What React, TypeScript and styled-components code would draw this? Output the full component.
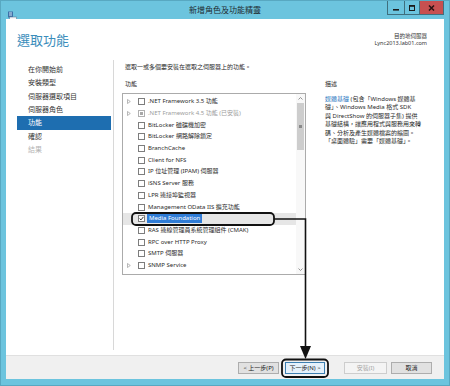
import styled, { createGlobalStyle } from 'styled-components'

const GlobalStyle = createGlobalStyle`
  html, body {
    margin: 0;
    padding: 0;
    background: #ffffff;
  }
  body {
    font-family: "Noto Sans", "Noto Sans CJK TC", sans-serif;
    color: #2b2b2b;
  }
  * {
    box-sizing: border-box;
  }
`

const Window = styled.div`
  position: relative;
  width: 450px;
  height: 386px;
  background: #6cc4de;
  border: 1px solid #58a8c1;
  display: flex;
  flex-direction: column;
  overflow: hidden;
`

const TitleBar = styled.div`
  height: 18px;
  flex: 0 0 18px;
  display: grid;
  grid-template-columns: 1fr auto 1fr;
  align-items: start;
`

const AppIcon = styled.div`
  justify-self: start;
  margin: 3px 0 0 6px;
  width: 10px;
  height: 10px;
`

const Caption = styled.div`
  font-size: 8px;
  line-height: 18px;
  color: #1e2a30;
  font-family: "Noto Sans CJK TC", sans-serif;
`

const Controls = styled.div`
  justify-self: end;
  margin-right: 5px;
  display: flex;
  height: 14px;
  border: 1px solid #3f6f7e;
  border-top: none;
`

const CtrlButton = styled.div<{ $w: number; $close?: boolean }>`
  width: ${(p) => p.$w}px;
  height: 13px;
  display: flex;
  align-items: center;
  justify-content: center;
  background: ${(p) => (p.$close ? '#c75050' : 'transparent')};
  & + & {
    border-left: 1px solid #3f6f7e;
  }
`

const Client = styled.div`
  flex: 1;
  margin: 0 5px 6px 5px;
  background: #ffffff;
  display: flex;
  flex-direction: column;
`

const Main = styled.div`
  flex: 1;
  display: flex;
  flex-direction: column;
`

const Header = styled.div`
  height: 41px;
  flex: 0 0 41px;
  display: flex;
  justify-content: space-between;
  align-items: flex-start;
  padding: 13px 17px 0 11px;
`

const Heading = styled.h1`
  margin: 0;
  font-size: 13px;
  line-height: 16px;
  font-weight: 400;
  color: #3a8dbb;
  font-family: "Noto Sans CJK TC", sans-serif;
`

const Target = styled.div`
  text-align: right;
  font-size: 5.5px;
  line-height: 7px;
  color: #333;
  margin-top: 1px;
`

const Body = styled.div`
  flex: 1;
  display: flex;
  padding-bottom: 5px;
`

const Nav = styled.ul`
  list-style: none;
  margin: 0;
  width: 108px;
  flex: 0 0 108px;
  padding: 3px 2px 0 11px;
  border-right: 1px solid #d8d8d8;
`

const NavItem = styled.li<{ $active?: boolean; $disabled?: boolean }>`
  height: 13.33px;
  line-height: 13.33px;
  font-size: 7px;
  padding-left: 11px;
  background: ${(p) => (p.$active ? '#1e6eb0' : 'transparent')};
  color: ${(p) => (p.$active ? '#ffffff' : p.$disabled ? '#b4b4b4' : '#333333')};
`

const Content = styled.div`
  flex: 1;
  padding-top: 3px;
  display: flex;
  flex-direction: column;
`

const Intro = styled.div`
  font-size: 6px;
  line-height: 9px;
  padding-left: 11px;
`

const Columns = styled.div`
  display: flex;
  gap: 19px;
  padding-left: 8px;
  margin-top: 7.5px;
`

const Column = styled.div<{ $w?: number }>`
  display: flex;
  flex-direction: column;
  width: ${(p) => (p.$w ? `${p.$w}px` : 'auto')};
`

const Label = styled.div<{ $indent?: number }>`
  font-size: 6px;
  line-height: 9px;
  padding-left: ${(p) => p.$indent ?? 0}px;
`

const ListBox = styled.div`
  margin-top: 4.5px;
  width: 184px;
  height: 182px;
  border: 1px solid #ababab;
  display: flex;
  overflow: hidden;
`

const Rows = styled.div`
  flex: 1;
  padding-top: 2px;
  overflow: hidden;
`

const Row = styled.div<{ $selected?: boolean; $disabled?: boolean }>`
  height: 11.7px;
  display: flex;
  align-items: center;
  padding-left: 4px;
  font-size: 6px;
  white-space: nowrap;
  background: ${(p) => (p.$selected ? '#e6e6e6' : 'transparent')};
  color: ${(p) => (p.$disabled ? '#9d9d9d' : '#2b2b2b')};
`

const Expander = styled.div<{ $show?: boolean }>`
  width: 11px;
  flex: 0 0 11px;
  display: flex;
  align-items: center;
  visibility: ${(p) => (p.$show ? 'visible' : 'hidden')};
`

const Box = styled.div<{ $state: 'off' | 'on' | 'part' }>`
  width: 7px;
  height: 7px;
  flex: 0 0 7px;
  border: 1px solid ${(p) => (p.$state === 'part' ? '#b0b0b0' : '#7d7d7d')};
  background: #fff;
  display: flex;
  align-items: center;
  justify-content: center;
  &::after {
    content: '';
    display: ${(p) => (p.$state === 'part' ? 'block' : 'none')};
    width: 3px;
    height: 3px;
    background: #a8a8a8;
  }
`

const RowText = styled.span<{ $selected?: boolean }>`
  margin-left: ${(p) => (p.$selected ? '2px' : '3px')};
  padding: ${(p) => (p.$selected ? '0 2px' : '0')};
  line-height: 9px;
  background: ${(p) => (p.$selected ? '#2f7cd6' : 'transparent')};
  color: ${(p) => (p.$selected ? '#ffffff' : 'inherit')};
`

const ScrollBar = styled.div`
  width: 9px;
  flex: 0 0 9px;
  background: #f8f8f8;
  display: flex;
  flex-direction: column;
`

const ScrollArrow = styled.div`
  height: 9px;
  flex: 0 0 9px;
  display: flex;
  align-items: center;
  justify-content: center;
`

const Track = styled.div`
  flex: 1;
`

const Thumb = styled.div`
  height: 47px;
  margin: 0 1px;
  background: #cdcdcd;
  display: flex;
  align-items: center;
  justify-content: center;
`

const Grip = styled.div`
  width: 3px;
  height: 3px;
  border-top: 1px solid #8a8a8a;
  border-bottom: 1px solid #8a8a8a;
  position: relative;
  &::after {
    content: '';
    position: absolute;
    left: 0;
    right: 0;
    top: 0;
    border-top: 1px solid #8a8a8a;
  }
`

const Description = styled.div`
  margin-top: 6px;
  font-size: 6px;
  line-height: 8.6px;
  color: #2b2b2b;
  font-family: "Noto Sans", "Noto Sans CJK TC", sans-serif;
`

const Link = styled.span`
  color: #1e74c0;
`

const Footer = styled.div`
  height: 24px;
  flex: 0 0 24px;
  background: #f0f0f0;
  border-top: 1px solid #e0e0e0;
  display: flex;
  align-items: center;
  justify-content: flex-end;
  padding-right: 12px;
`

const Button = styled.div<{ $w: number; $gap: number; $primary?: boolean; $disabled?: boolean }>`
  width: ${(p) => p.$w}px;
  height: 12px;
  margin-left: ${(p) => p.$gap}px;
  border: 1px solid ${(p) => (p.$primary ? '#3c7fb1' : p.$disabled ? '#cdcdcd' : '#adadad')};
  background: ${(p) => (p.$primary ? '#e5f1fb' : p.$disabled ? '#f4f4f4' : '#e1e1e1')};
  color: ${(p) => (p.$disabled ? '#a6a6a6' : '#222')};
  font-size: 6px;
  line-height: 10px;
  text-align: center;
  white-space: nowrap;
`

const Overlay = styled.svg`
  position: absolute;
  left: -1px;
  top: -1px;
  pointer-events: none;
`

type Feature = { name: string; expand?: boolean; state?: 'off' | 'on' | 'part'; disabled?: boolean; selected?: boolean }

// last row is only partly visible at the bottom of the list, its label is hidden
const features: Feature[] = [
  { name: '.NET Framework 3.5 功能', expand: true },
  { name: '.NET Framework 4.5 功能 (已安裝)', expand: true, state: 'part', disabled: true },
  { name: 'BitLocker 磁碟機加密' },
  { name: 'BitLocker 網路解除鎖定' },
  { name: 'BranchCache' },
  { name: 'Client for NFS' },
  { name: 'IP 位址管理 (IPAM) 伺服器' },
  { name: 'iSNS Server 服務' },
  { name: 'LPR 連接埠監視器' },
  { name: 'Management OData IIS 擴充功能' },
  { name: 'Media Foundation', state: 'on', selected: true },
  { name: 'RAS 連線管理員系統管理組件 (CMAK)' },
  { name: 'RPC over HTTP Proxy' },
  { name: 'SMTP 伺服器' },
  { name: 'SNMP Service', expand: true },
  { name: '' },
]

const steps = ['在你開始前', '安裝類型', '伺服器選取項目', '伺服器角色', '功能', '確認', '結果']

const Chevron = ({ up }: { up?: boolean }) => (
  <svg width="5" height="3" viewBox="0 0 5 3">
    <path d={up ? 'M0.5 2.5 L2.5 0.5 L4.5 2.5' : 'M0.5 0.5 L2.5 2.5 L4.5 0.5'} stroke="#7a7a7a" strokeWidth="0.8" fill="none" />
  </svg>
)

const App = () => {
  return (
    <>
      <GlobalStyle />
      <Window>
        <TitleBar>
          <AppIcon>
            <svg width="10" height="10" viewBox="0 0 10 10">
              <rect x="1" y="0.5" width="5" height="6" fill="#3d6fa8" />
              <rect x="2" y="1.5" width="3" height="1" fill="#cfe3f3" />
              <rect x="2" y="3.5" width="3" height="1" fill="#cfe3f3" />
              <rect x="2.5" y="6" width="7" height="3.5" fill="#f4f6f8" stroke="#5a7b96" strokeWidth="0.6" />
            </svg>
          </AppIcon>
          <Caption>新增角色及功能精靈</Caption>
          <Controls>
            <CtrlButton $w={16}>
              <svg width="6" height="6" viewBox="0 0 6 6">
                <rect x="0" y="4" width="6" height="1.6" fill="#1b1b1b" />
              </svg>
            </CtrlButton>
            <CtrlButton $w={15}>
              <svg width="6" height="6" viewBox="0 0 6 6">
                <rect x="0.5" y="0.5" width="5" height="5" fill="none" stroke="#1b1b1b" strokeWidth="1" />
                <rect x="0" y="0" width="6" height="1.8" fill="#1b1b1b" />
              </svg>
            </CtrlButton>
            <CtrlButton $w={24} $close>
              <svg width="7" height="6" viewBox="0 0 7 6">
                <path d="M1 0.5 L6 5.5 M6 0.5 L1 5.5" stroke="#2a1212" strokeWidth="1.5" />
              </svg>
            </CtrlButton>
          </Controls>
        </TitleBar>
        <Client>
          <Main>
            <Header>
              <Heading>選取功能</Heading>
              <Target>
                目的地伺服器
                <br />
                Lync2013.lab01.com
              </Target>
            </Header>
            <Body>
              <Nav>
                {steps.map((s, i) => (
                  <NavItem key={s} $active={i === 4} $disabled={i === 6}>
                    {s}
                  </NavItem>
                ))}
              </Nav>
              <Content>
                <Intro>選取一或多個要安裝在選取之伺服器上的功能。</Intro>
                <Columns>
                  <Column>
                    <Label $indent={3}>功能</Label>
                    <ListBox>
                      <Rows>
                        {features.map((f, i) => (
                          <Row key={i} $selected={f.selected} $disabled={f.disabled}>
                            <Expander $show={f.expand}>
                              <svg width="4" height="5" viewBox="0 0 4 5">
                                <path d="M0.5 0.5 L3.3 2.5 L0.5 4.5 Z" stroke="#9a9a9a" strokeWidth="0.7" fill="none" />
                              </svg>
                            </Expander>
                            <Box $state={f.state ?? 'off'}>
                              {f.state === 'on' && (
                                <svg width="5" height="5" viewBox="0 0 5 5">
                                  <path d="M0.6 2.6 L2 3.9 L4.4 0.9" stroke="#1a1a1a" strokeWidth="0.9" fill="none" />
                                </svg>
                              )}
                            </Box>
                            {f.name && <RowText $selected={f.selected}>{f.name}</RowText>}
                          </Row>
                        ))}
                      </Rows>
                      <ScrollBar>
                        <ScrollArrow>
                          <Chevron up />
                        </ScrollArrow>
                        <Track>
                          <Thumb>
                            <Grip />
                          </Thumb>
                        </Track>
                        <ScrollArrow>
                          <Chevron />
                        </ScrollArrow>
                      </ScrollBar>
                    </ListBox>
                  </Column>
                  <Column $w={104}>
                    <Label>描述</Label>
                    <Description>
                      <Link>媒體基礎</Link> (包含「Windows 媒體基
                      <br />
                      礎」、Windows Media 格式 SDK
                      <br />
                      與 DirectShow 的伺服器子集) 提供
                      <br />
                      基礎結構，讓應用程式與服務用來轉
                      <br />
                      碼、分析及產生媒體檔案的縮圖。
                      <br />
                      「桌面體驗」需要「媒體基礎」。
                    </Description>
                  </Column>
                </Columns>
              </Content>
            </Body>
          </Main>
          <Footer>
            <Button $w={41} $gap={0}>&lt; 上一步(P)</Button>
            <Button $w={40} $gap={6} $primary>下一步(N) &gt;</Button>
            <Button $w={43} $gap={19} $disabled>安裝(I)</Button>
            <Button $w={41} $gap={4}>取消</Button>
          </Footer>
        </Client>
        <Overlay width="450" height="386" viewBox="0 0 450 386">
          <rect x="132" y="213" width="142" height="12" rx="4" fill="none" stroke="#111" strokeWidth="1.8" />
          <polyline points="274,219 305.5,219 305.5,348" fill="none" stroke="#111" strokeWidth="1.6" />
          <polygon points="300,346 311,346 305.5,359" fill="#111" />
          <rect x="282" y="359.5" width="46" height="17.5" rx="4" fill="none" stroke="#111" strokeWidth="1.8" />
        </Overlay>
      </Window>
    </>
  )
}

export default App
